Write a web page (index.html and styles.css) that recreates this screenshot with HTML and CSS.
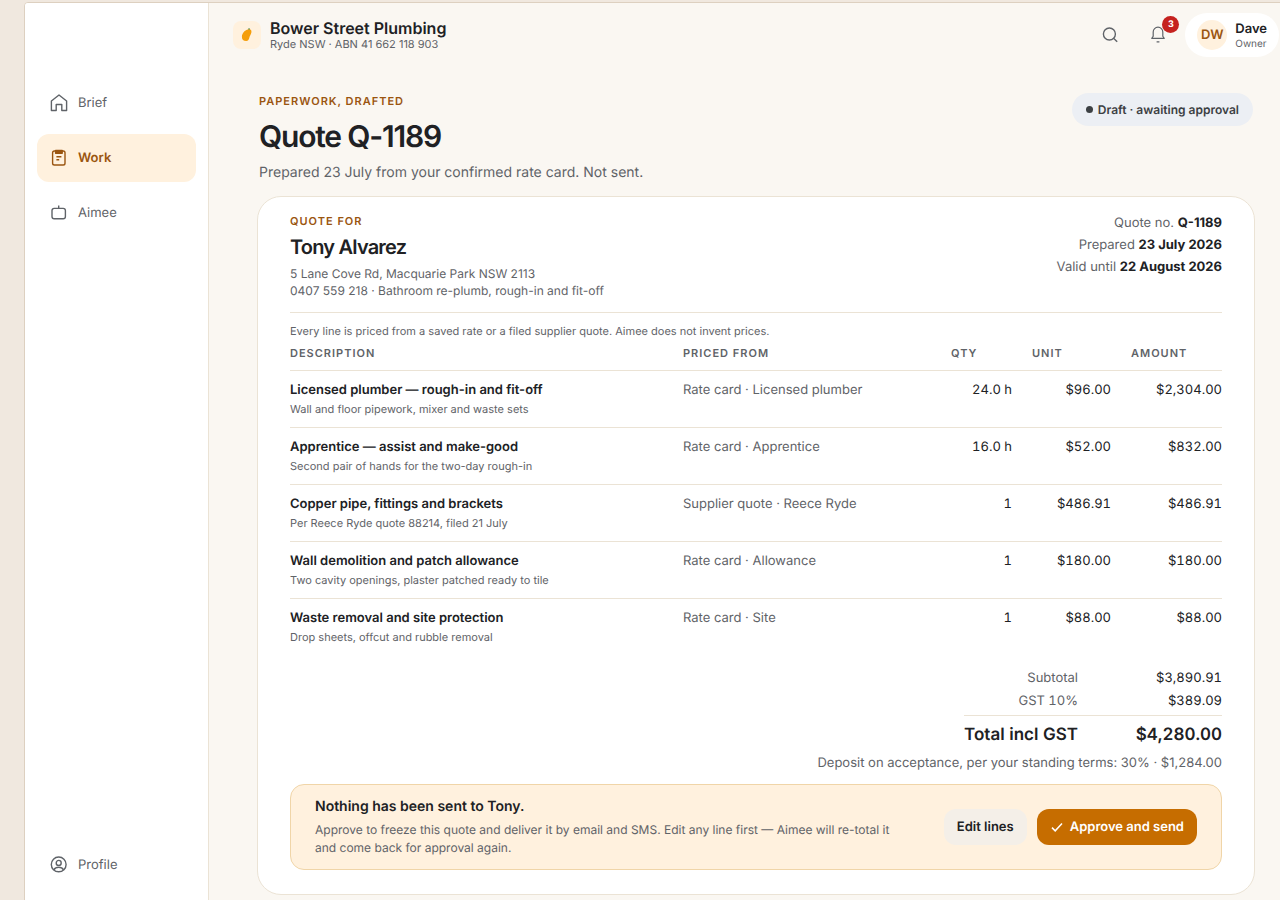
FILE: index.html
```html
<!DOCTYPE html>
<html lang="en">
<head>
  <meta charset="UTF-8">
  <title>Quote Q-1189 · Bower Street Plumbing</title>
  <meta name="viewport" content="width=device-width, initial-scale=1.0">
  <link rel="stylesheet" href="styles.css">
</head>
<body>
  <div class="app">
    <nav class="sidebar">
      <a class="nav-item" href="#brief">
        <svg class="icon" viewBox="0 0 18 18"><path d="M1.400 7 9 1l7.600 6v9.500h-4.800v-6H6.200v6H1.400z"/></svg>
        Brief
      </a>
      <a class="nav-item active" href="#work">
        <svg class="icon" viewBox="0 0 18 18"><rect x="2.600" y="2" width="12.400" height="14" rx="1.800"/><path class="solid" d="M5.600 1.400h6.600v2.800H5.600z"/><path d="M6.400 7.800h5M6.400 10.800h2.800"/></svg>
        Work
      </a>
      <a class="nav-item" href="#aimee">
        <svg class="icon" viewBox="0 0 18 18"><rect x="2" y="4.400" width="13.400" height="10.400" rx="2.200"/><path d="M8.700 1.600v2.800"/></svg>
        Aimee
      </a>
      <a class="nav-item profile" href="#profile">
        <svg class="icon" viewBox="0 0 18 18"><circle cx="8.700" cy="8.400" r="7.400"/><circle cx="8.700" cy="6.900" r="2.500"/><path d="M3.900 13.800c1-1.700 2.700-2.500 4.800-2.500s3.800.8 4.800 2.500"/></svg>
        Profile
      </a>
    </nav>

    <div class="main">
      <header class="topbar">
        <div class="logo">
          <svg viewBox="0 0 28 28"><path class="fruit" d="M16.600 8.200c2 .3 2.300 2.400 1.400 4.500-.6 1.500-1.300 2.300-1.600 3.900-.3 1.700-1.300 3.500-3.200 3.500-2.700 0-4.500-1.900-4.300-4.700.2-3.600 4-7.700 7.700-7.200z"/><path class="stem" d="m14.800 8.300 1.400-1.300.8 1.500"/></svg>
        </div>
        <div class="business">
          <div class="business-name">Bower Street Plumbing</div>
          <div class="business-meta">Ryde NSW · ABN 41 662 118 903</div>
        </div>
        <div class="actions">
          <button class="icon-btn" aria-label="Search">
            <svg class="icon" viewBox="0 0 18 18"><circle cx="8.400" cy="8" r="6"/><path d="m12.800 12.400 3.400 3.400"/></svg>
          </button>
          <button class="icon-btn" aria-label="Notifications">
            <svg class="icon thin" viewBox="0 0 18 18"><path d="M2.800 12.400h12.400l-1.400-2.200V6a4.800 4.800 0 0 0-9.600 0v4.200zM7.600 15.800h2.800"/></svg>
            <span class="badge">3</span>
          </button>
          <button class="user">
            <span class="avatar">DW</span>
            <span class="user-text">
              <span class="user-name">Dave</span>
              <span class="user-role">Owner</span>
            </span>
          </button>
        </div>
      </header>

      <main class="content">
        <div class="page-head">
          <div>
            <div class="eyebrow">PAPERWORK, DRAFTED</div>
            <h1>Quote Q-1189</h1>
            <p class="lead">Prepared 23 July from your confirmed rate card. Not sent.</p>
          </div>
          <div class="status">Draft · awaiting approval</div>
        </div>

        <section class="card">
          <div class="quote-head">
            <div>
              <div class="eyebrow">QUOTE FOR</div>
              <h2>Tony Alvarez</h2>
              <p class="address">5 Lane Cove Rd, Macquarie Park NSW 2113<br>0407 559 218 · Bathroom re-plumb, rough-in and fit-off</p>
            </div>
            <div class="quote-meta">
              <div>Quote no. <b>Q-1189</b></div>
              <div>Prepared <b>23 July 2026</b></div>
              <div>Valid until <b>22 August 2026</b></div>
            </div>
          </div>

          <table class="lines">
            <caption>Every line is priced from a saved rate or a filed supplier quote. Aimee does not invent prices.</caption>
            <colgroup>
              <col><col class="col-source"><col class="col-qty"><col class="col-unit"><col class="col-amount">
            </colgroup>
            <thead>
              <tr><th>DESCRIPTION</th><th>PRICED FROM</th><th>QTY</th><th>UNIT</th><th>AMOUNT</th></tr>
            </thead>
            <tbody>
              <tr>
                <td><strong>Licensed plumber — rough-in and fit-off</strong><small>Wall and floor pipework, mixer and waste sets</small></td>
                <td class="source">Rate card · Licensed plumber</td>
                <td class="num">24.0 h</td><td class="num">$96.00</td><td class="num">$2,304.00</td>
              </tr>
              <tr>
                <td><strong>Apprentice — assist and make-good</strong><small>Second pair of hands for the two-day rough-in</small></td>
                <td class="source">Rate card · Apprentice</td>
                <td class="num">16.0 h</td><td class="num">$52.00</td><td class="num">$832.00</td>
              </tr>
              <tr>
                <td><strong>Copper pipe, fittings and brackets</strong><small>Per Reece Ryde quote 88214, filed 21 July</small></td>
                <td class="source">Supplier quote · Reece Ryde</td>
                <td class="num">1</td><td class="num">$486.91</td><td class="num">$486.91</td>
              </tr>
              <tr>
                <td><strong>Wall demolition and patch allowance</strong><small>Two cavity openings, plaster patched ready to tile</small></td>
                <td class="source">Rate card · Allowance</td>
                <td class="num">1</td><td class="num">$180.00</td><td class="num">$180.00</td>
              </tr>
              <tr>
                <td><strong>Waste removal and site protection</strong><small>Drop sheets, offcut and rubble removal</small></td>
                <td class="source">Rate card · Site</td>
                <td class="num">1</td><td class="num">$88.00</td><td class="num">$88.00</td>
              </tr>
            </tbody>
          </table>

          <table class="totals">
            <tr><th>Subtotal</th><td>$3,890.91</td></tr>
            <tr><th>GST 10%</th><td>$389.09</td></tr>
            <tr class="grand"><th>Total incl GST</th><td>$4,280.00</td></tr>
          </table>
          <p class="deposit">Deposit on acceptance, per your standing terms: 30% · $1,284.00</p>

          <div class="approval">
            <div class="approval-text">
              <h3>Nothing has been sent to Tony.</h3>
              <p>Approve to freeze this quote and deliver it by email and SMS. Edit any line first — Aimee will re-total it and come back for approval again.</p>
            </div>
            <div class="approval-actions">
              <button class="btn">Edit lines</button>
              <button class="btn primary">
                <svg class="check" viewBox="0 0 14 14"><path d="m2 7.600 3.200 3.200L12 3.600"/></svg>
                Approve and send
              </button>
            </div>
          </div>
        </section>
      </main>
    </div>
  </div>
</body>
</html>
```

FILE: styles.css
```css
* { box-sizing: border-box; }

body {
  font-family: Inter, sans-serif;
  font-size: 13px;
  line-height: 18px;
  text-rendering: geometricPrecision;
  margin: 0;
  background: #f0e8df;
  color: #202124;
  overflow: hidden;
}

h1, h2, h3, p { margin: 0; }

button {
  font: inherit;
  color: inherit;
  text-rendering: inherit;
  border: none;
  background: none;
  padding: 0;
  cursor: pointer;
}

/* the shell runs off the right and bottom of the window */
.app {
  display: flex;
  min-height: 100vh;
  margin: 2px -24px 0 24px;
  border: 1px solid #ddd0c0;
  border-radius: 4px;
  background: #faf7f2;
  overflow: hidden;
}

.sidebar {
  display: flex;
  flex-direction: column;
  gap: 7px;
  flex: 0 0 184px;
  padding: 76px 12px 38px;
  background: #fff;
  border-right: 1px solid #ebe3d5;
}

.nav-item {
  display: flex;
  align-items: center;
  gap: 10px;
  height: 48px;
  padding: 0 13px;
  border-radius: 12px;
  line-height: 19px;
  color: #5f6368;
  text-decoration: none;
}

.nav-item.active {
  background: #fff1de;
  color: #9a5510;
  font-weight: 600;
}

.profile { margin-top: auto; }

.icon {
  width: 18px;
  height: 18px;
  fill: none;
  stroke: currentColor;
  stroke-width: 1.4;
  stroke-linejoin: round;
}

.icon.thin { stroke-width: 1.2; }
.solid { fill: currentColor; }

.main {
  flex: 1;
  min-width: 0;
}

.topbar {
  display: flex;
  align-items: center;
  gap: 9px;
  height: 64px;
  padding: 0 24px;
}

.logo {
  width: 28px;
  height: 28px;
  border-radius: 8px;
  background: #fff1de;
}

.logo svg { display: block; }
.fruit { fill: #f59e0b; }
.stem { fill: #2e7d32; }

.business-name {
  font-size: 16px;
  line-height: 18px;
  font-weight: 600;
}

.business-meta {
  font-size: 11px;
  line-height: 14px;
  color: #5f6368;
}

.actions {
  display: flex;
  align-items: center;
  margin-left: auto;
}

.icon-btn {
  position: relative;
  display: grid;
  place-items: center;
  width: 48px;
  height: 48px;
  color: #5f6368;
}

.icon-btn + .user { margin-left: 3px; }

.badge {
  position: absolute;
  top: 5px;
  right: 3px;
  width: 17px;
  height: 17px;
  border-radius: 50%;
  background: #c5221f;
  color: #fff;
  font-size: 9px;
  line-height: 17px;
  font-weight: 700;
}

.user {
  display: flex;
  align-items: center;
  gap: 8px;
  height: 44px;
  padding: 0 12px;
  border-radius: 22px;
  background: #fff;
  text-align: left;
}

.avatar {
  display: grid;
  place-items: center;
  width: 30px;
  height: 30px;
  border-radius: 50%;
  background: #fff1de;
  color: #9a5510;
  font-weight: 600;
}

.user-name, .user-role { display: block; }

.user-name {
  line-height: 18px;
  font-weight: 600;
}

.user-role {
  font-size: 10px;
  line-height: 12px;
  color: #5f6368;
}

.content { padding: 26px 48px 32px; }

.page-head {
  display: flex;
  justify-content: space-between;
  align-items: flex-start;
  padding: 0 2px;
}

.eyebrow {
  font-size: 11px;
  line-height: 16px;
  font-weight: 600;
  letter-spacing: 1px;
  color: #9a5510;
}

h1 {
  margin: 8px 0 6px;
  font-size: 30px;
  line-height: 40px;
  font-weight: 600;
  letter-spacing: -0.04em;
}

.lead {
  font-size: 14px;
  line-height: 20px;
  color: #5f6368;
}

.status {
  display: flex;
  align-items: center;
  gap: 5px;
  height: 33px;
  padding: 0 14px;
  border-radius: 17px;
  background: #eceff4;
  color: #3c4043;
  font-size: 12px;
  font-weight: 600;
}

.status::before {
  content: "";
  width: 7px;
  height: 7px;
  border-radius: 50%;
  background: currentColor;
}

.card {
  margin-top: 13px;
  padding: 16px 32px 24px;
  border: 1px solid #ebe3d5;
  border-radius: 24px;
  background: #fff;
}

.quote-head {
  display: flex;
  justify-content: space-between;
  padding-bottom: 13px;
  border-bottom: 1px solid #ebe3d5;
}

h2 {
  margin: 4px 0;
  font-size: 20px;
  line-height: 28px;
  font-weight: 600;
  letter-spacing: -0.04em;
}

.address {
  font-size: 12px;
  line-height: 17px;
  color: #5f6368;
}

.quote-meta {
  margin-top: -1px;
  line-height: 22px;
  text-align: right;
  color: #5f6368;
}

.quote-meta b { color: #202124; }

table { border-collapse: collapse; }

.lines {
  width: 100%;
  table-layout: fixed;
}

.lines caption {
  padding: 10px 0 6px;
  font-size: 11px;
  line-height: 16px;
  text-align: left;
  color: #5f6368;
}

.col-source { width: 268px; }
.col-qty { width: 81px; }
.col-unit { width: 99px; }
.col-amount { width: 91px; }

.lines th {
  padding: 0 0 9px;
  font-size: 11px;
  line-height: 16px;
  font-weight: 600;
  letter-spacing: 1px;
  text-align: left;
  color: #5f6368;
}

.lines td {
  padding: 10px 20px 10px 0;
  vertical-align: top;
}

.lines td:last-child { padding-right: 0; }
.lines thead tr, .lines tbody tr { border-bottom: 1px solid #ebe3d5; }
.lines tbody tr:last-child { border-bottom: none; }

.lines strong {
  display: block;
  font-weight: 600;
}

.lines small {
  display: block;
  margin-top: 2px;
  font-size: 11px;
  line-height: 16px;
  color: #5f6368;
}

.lines .source { color: #5f6368; }

.lines .num {
  text-align: right;
  font-variant-numeric: tabular-nums;
}

.totals {
  margin: 14px 0 0 auto;
  text-align: right;
  font-variant-numeric: tabular-nums;
}

.totals th, .totals td { padding: 0 0 5px; }

.totals th {
  font-weight: 400;
  color: #5f6368;
}

.totals td { width: 144px; }

.grand { border-top: 1px solid #ebe3d5; }

.totals .grand th, .totals .grand td {
  padding: 8px 0 6px;
  font-size: 17px;
  line-height: 22px;
  font-weight: 600;
  color: #202124;
}

.deposit {
  margin: 2px 0 12px;
  text-align: right;
  color: #5f6368;
}

.approval {
  display: flex;
  align-items: center;
  gap: 32px;
  padding: 12px 24px;
  border: 1px solid #f0d5a8;
  border-radius: 14px;
  background: #fff1de;
}

.approval-text { flex: 1; }

h3 {
  margin-bottom: 4px;
  font-size: 14px;
  line-height: 20px;
  font-weight: 600;
}

.approval-text p {
  font-size: 12px;
  color: #5f6368;
}

.approval-actions {
  display: flex;
  gap: 10px;
}

.btn {
  display: flex;
  align-items: center;
  gap: 6px;
  height: 36px;
  padding: 0 13px;
  border-radius: 12px;
  background: #f4efe8;
  font-weight: 600;
  white-space: nowrap;
}

.btn.primary {
  background: #c66d00;
  color: #fff;
}

.check {
  width: 14px;
  height: 14px;
  fill: none;
  stroke: currentColor;
  stroke-width: 1.5;
}
```
